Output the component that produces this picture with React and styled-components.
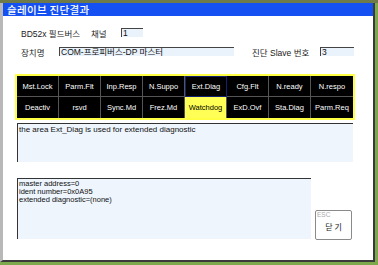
import React from 'react'
import styled, { createGlobalStyle } from 'styled-components';

const GlobalStyle = createGlobalStyle`
    html, body {
        margin: 0;
        padding: 0;
        background: #7da94c;
        width: 378px;
        height: 265px;
        overflow: hidden;
    }
    body {
        font-family: "Liberation Sans", "Noto Sans CJK KR", sans-serif;
    }
`;

const cells = [
    ['Mst.Lock', 'Parm.Flt', 'Inp.Resp', 'N.Suppo', 'Ext.Diag', 'Cfg.Flt', 'N.ready', 'N.respo'],
    ['Deactiv', 'rsvd', 'Sync.Md', 'Frez.Md', 'Watchdog', 'ExD.Ovf', 'Sta.Diag', 'Parm.Req'],
];

function App() {
    return (
        <>
            <GlobalStyle />
            <Desktop>
                <Window>
                    <TitleBar>슬레이브 진단결과</TitleBar>
                    <Body>
                        <FieldRow top={12}>
                            <Label width={70}>BD52x 필드버스</Label>
                            <Label width={30}>채널</Label>
                            <Input width={22}>1</Input>
                        </FieldRow>
                        <FieldRow top={10}>
                            <Label width={38}>장치명</Label>
                            <Input width={175}>COM-프로피버스-DP 마스터</Input>
                            <Spacer width={18} />
                            <Label width={68}>진단 Slave 번호</Label>
                            <Input width={34}>3</Input>
                        </FieldRow>
                        <Grid>
                            {cells.flat().map((c) => (
                                <Cell key={c} active={c === 'Watchdog'} selected={c === 'Ext.Diag'}>{c}</Cell>
                            ))}
                        </Grid>
                        <TextBox width={336} height={39} top={3}>
                            the area Ext_Diag is used for extended diagnostic
                        </TextBox>
                        <Bottom>
                            <TextBox width={294} height={61} top={0}>
                                <Line>master address=0</Line>
                                <Line>ident number=0x0A95</Line>
                                <Line>extended diagnostic=(none)</Line>
                            </TextBox>
                            <CloseButton>
                                <Esc>ESC</Esc>
                                닫 기
                            </CloseButton>
                        </Bottom>
                    </Body>
                </Window>
            </Desktop>
        </>
    )
}

const Desktop = styled.div`
    width: 378px;
    height: 265px;
    padding-top: 3px;
    box-sizing: border-box;
    background: linear-gradient(#6e7a4a 0 3px, #7da94c 3px);
`;

const Window = styled.div`
    width: 375px;
    height: 259px;
    box-sizing: border-box;
    background: #fff;
    border-left: 3px solid #b8b8b8;
    border-right: 2px solid #3a3a3a;
    border-bottom: 2px solid #3a3a3a;
    display: flex;
    flex-direction: column;
`;

const TitleBar = styled.div`
    height: 13px;
    background: #1550f2;
    color: #fff;
    font-family: "Noto Sans CJK KR", sans-serif;
    font-size: 10.5px;
    font-weight: 500;
    line-height: 13px;
    padding-left: 4px;
    letter-spacing: 0.3px;
`;

const Body = styled.div`
    display: flex;
    flex-direction: column;
    padding-left: 12px;
`;

const FieldRow = styled.div`
    display: flex;
    align-items: center;
    height: 9px;
    margin-top: ${p => p.top}px;
    padding-left: 6px;
`;

const Label = styled.div`
    width: ${p => p.width}px;
    font-size: 8.5px;
    color: #222;
    white-space: nowrap;
`;

const Spacer = styled.div`
    width: ${p => p.width}px;
`;

const Input = styled.div`
    width: ${p => p.width}px;
    height: 9px;
    box-sizing: border-box;
    background: #eaf2fb;
    border-top: 1px solid #444;
    border-left: 1px solid #444;
    font-size: 8.5px;
    line-height: 8px;
    padding-left: 1px;
    color: #111;
    white-space: nowrap;
    overflow: hidden;
`;

const Grid = styled.div`
    margin-top: 18px;
    width: 340px;
    height: 46px;
    box-sizing: border-box;
    border: 2px solid #ffff44;
    background: #000;
    display: grid;
    grid-template-columns: repeat(8, 1fr);
    grid-template-rows: repeat(2, 1fr);
`;

const Cell = styled.div`
    display: flex;
    align-items: center;
    justify-content: center;
    box-sizing: border-box;
    border-right: 1px solid #555;
    border-bottom: 1px solid #555;
    ${p => p.selected && 'border: 1px solid #142070;'}
    background: ${p => (p.active ? '#ffff55' : '#000')};
    color: ${p => (p.active ? '#000' : '#fff')};
    font-size: 7.5px;
    white-space: nowrap;
    &:nth-child(8n) { border-right: none; }
    &:nth-child(n+9) { border-bottom: none; }
`;

const TextBox = styled.div`
    margin-top: ${p => p.top}px;
    margin-left: 2px;
    width: ${p => p.width}px;
    height: ${p => p.height}px;
    box-sizing: border-box;
    background: #eef5fd;
    border-top: 1px solid #333;
    border-left: 1px solid #333;
    font-size: 8px;
    line-height: 9px;
    padding: 1px 0 0 1px;
    color: #111;
`;

const Line = styled.div`
    font-size: 7.5px;
    line-height: 8px;
    height: 8px;
    white-space: nowrap;
`;

const Bottom = styled.div`
    display: flex;
    align-items: flex-end;
    margin-top: 16px;
    gap: 4px;
`;

const CloseButton = styled.div`
    position: relative;
    width: 37px;
    height: 30px;
    margin-bottom: -1px;
    box-sizing: border-box;
    border: 1px solid #8a8a8a;
    border-radius: 2px;
    background: #fff;
    font-family: "Noto Sans CJK KR", sans-serif;
    font-size: 8px;
    color: #222;
    display: flex;
    align-items: center;
    justify-content: center;
    padding-top: 3px;
`;

const Esc = styled.span`
    position: absolute;
    top: 0;
    left: 1px;
    font-family: "Liberation Sans", sans-serif;
    font-size: 6.5px;
    color: #aaa;
`;

export default App;
